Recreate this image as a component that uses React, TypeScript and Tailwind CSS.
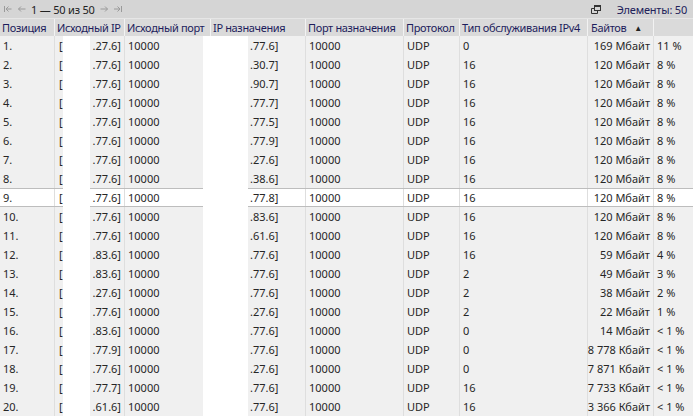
import React from "react";

type Row = [string, string, string, string, string, string, string];

const rows: Row[] = [
  ["1.", ".27.6]", ".77.6]", "0", "169 Мбайт", "11 %", ""],
  ["2.", ".77.6]", ".30.7]", "16", "120 Мбайт", "8 %", ""],
  ["3.", ".77.6]", ".90.7]", "16", "120 Мбайт", "8 %", ""],
  ["4.", ".77.6]", ".77.7]", "16", "120 Мбайт", "8 %", ""],
  ["5.", ".77.6]", ".77.5]", "16", "120 Мбайт", "8 %", ""],
  ["6.", ".77.6]", ".77.9]", "16", "120 Мбайт", "8 %", ""],
  ["7.", ".77.6]", ".27.6]", "16", "120 Мбайт", "8 %", ""],
  ["8.", ".77.6]", ".38.6]", "16", "120 Мбайт", "8 %", ""],
  ["9.", ".77.6]", ".77.8]", "16", "120 Мбайт", "8 %", "sel"],
  ["10.", ".77.6]", ".83.6]", "16", "120 Мбайт", "8 %", ""],
  ["11.", ".77.6]", ".61.6]", "16", "120 Мбайт", "8 %", ""],
  ["12.", ".83.6]", ".77.6]", "16", "59 Мбайт", "4 %", ""],
  ["13.", ".83.6]", ".77.6]", "2", "49 Мбайт", "3 %", ""],
  ["14.", ".27.6]", ".77.6]", "2", "38 Мбайт", "2 %", ""],
  ["15.", ".77.6]", ".27.6]", "2", "22 Мбайт", "1 %", ""],
  ["16.", ".83.6]", ".77.6]", "0", "14 Мбайт", "< 1 %", ""],
  ["17.", ".77.9]", ".77.6]", "0", "8 778 Кбайт", "< 1 %", ""],
  ["18.", ".77.6]", ".27.6]", "0", "7 871 Кбайт", "< 1 %", ""],
  ["19.", ".77.7]", ".77.6]", "16", "7 733 Кбайт", "< 1 %", ""],
  ["20.", ".61.6]", ".77.6]", "16", "3 366 Кбайт", "< 1 %", ""],
];

const grid =
  "grid grid-cols-[55px_70px_86px_95px_98px_56px_128px_66px_1fr]";

export default function App() {
  return (
    <div
      className="relative w-[693px] h-[417px] overflow-hidden bg-white text-[11px] leading-none"
      style={{ fontFamily: '"Noto Sans", "Open Sans", sans-serif' }}
    >
      {/* toolbar */}
      <div className="h-[18px] bg-[#d5d5d5] flex items-center justify-between pl-[4px] pr-[6px] text-[#1f1f1f]">
        <div className="flex items-center gap-[5px] text-[#8f8f8f]">
          <span className="flex items-center">
            <svg width="8" height="8" viewBox="0 0 8 8" fill="none" stroke="#9a9a9a" strokeWidth="1">
              <path d="M0.5 1v6M7.5 4H2M4.5 1.5L2 4l2.5 2.5" />
            </svg>
          </span>
          <span className="flex items-center">
            <svg width="9" height="8" viewBox="0 0 9 8" fill="none" stroke="#9a9a9a" strokeWidth="1">
              <path d="M8.5 4H1.5M4 1.5L1.5 4 4 6.5" />
            </svg>
          </span>
          <span className="text-[#222] text-[11px] tracking-[-0.2px]">1 — 50 из 50</span>
          <span className="flex items-center">
            <svg width="9" height="8" viewBox="0 0 9 8" fill="none" stroke="#9a9a9a" strokeWidth="1">
              <path d="M0.5 4h7M5 1.5L7.5 4 5 6.5" />
            </svg>
          </span>
          <span className="flex items-center">
            <svg width="8" height="8" viewBox="0 0 8 8" fill="none" stroke="#9a9a9a" strokeWidth="1">
              <path d="M7.5 1v6M0 4h5.5M3.5 1.5L6 4 3.5 6.5" />
            </svg>
          </span>
        </div>
        <div className="flex items-center gap-[16px]">
          <svg width="10" height="10" viewBox="0 0 10 10" fill="none" stroke="#333" strokeWidth="1">
            <rect x="3.5" y="1.5" width="6" height="5" />
            <path d="M3.5 2.5h6" />
            <path d="M3.5 4.5H0.5v5h6v-3" />
          </svg>
          <span className="text-[#22225a] text-[11px] tracking-[-0.2px]">Элементы: 50</span>
        </div>
      </div>
      {/* header */}
      <div className={`${grid} h-[18px] bg-[#dadada] text-[#1d1d5c] text-[11px] tracking-[-0.35px] border-t border-[#e6e6e6]`}>
        {[
          "Позиция",
          "Исходный IP",
          "Исходный порт",
          "IP назначения",
          "Порт назначения",
          "Протокол",
          "Тип обслуживания IPv4",
        ].map((h, i) => (
          <div key={i} className="flex items-center pl-[2px] border-r border-[#f2f2f2] whitespace-nowrap overflow-hidden">
            {h}
          </div>
        ))}
        <div className="flex items-center pl-[3px] gap-[8px] border-r border-[#f2f2f2]">
          <span>Байтов</span>
          <span className="text-[8px] text-[#222]">▲</span>
        </div>
        <div />
      </div>
      {/* rows */}
      <div className="flex flex-col">
        {rows.map((r, i) => {
          const sel = r[6] === "sel";
          return (
            <div
              key={i}
              className={`${grid} h-[19px] text-[#262626] ${
                sel ? "bg-white border-y border-[#bdbdbd]" : "bg-[#f0f0f0]"
              }`}
            >
              <div className="flex items-center pl-[3px] border-r border-[#dedede]">{r[0]}</div>
              <div className="flex items-center justify-between pl-[4px] pr-[3px] border-r border-[#dedede]">
                <span>[</span>
                <span>{r[1]}</span>
              </div>
              <div className="flex items-center pl-[3px] border-r border-[#dedede]">10000</div>
              <div className="flex items-center pl-[39px] border-r border-[#dedede]">{r[2]}</div>
              <div className="flex items-center pl-[3px] border-r border-[#dedede]">10000</div>
              <div className="flex items-center pl-[3px] border-r border-[#dedede]">UDP</div>
              <div className="flex items-center pl-[3px] border-r border-[#dedede]">{r[3]}</div>
              <div className="flex items-center justify-end pr-[3px] border-r border-[#dedede] whitespace-nowrap">{r[4]}</div>
              <div className="flex items-center pl-[3px] whitespace-nowrap">{r[5]}</div>
            </div>
          );
        })}
      </div>
      {/* redaction overlays */}
      <div className="absolute left-[63px] top-[36px] w-[27px] h-[381px] bg-white" />
      <div className="absolute left-[203px] top-[36px] w-[45px] h-[381px] bg-white" />
    </div>
  );
}
